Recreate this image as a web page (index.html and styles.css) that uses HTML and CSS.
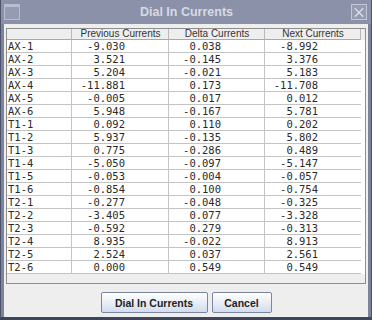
FILE: index.html
```html
<!DOCTYPE html>
<html lang="en">
<head>
    <meta charset="UTF-8">
    <title>Dial In Currents</title>
    <link rel="stylesheet" href="styles.css">
</head>
<body>
    <div class="window">
        <!-- title bar -->
        <div class="titlebar">
            <span class="win-icon"></span>
            <span class="title">Dial In Currents</span>
            <span class="close-btn">
                <svg width="15" height="15" viewBox="0 0 15 15">
                    <path d="M3 3 L12 12 M12 3 L3 12" stroke="#d9dce5" stroke-width="1.6" fill="none"/>
                </svg>
            </span>
        </div>
        <div class="content">
            <!-- table in its scroll pane -->
            <div class="scrollpane">
                <div class="row head">
                    <div class="cell"></div>
                    <div class="cell">Previous Currents</div>
                    <div class="cell">Delta Currents</div>
                    <div class="cell">Next Currents</div>
                </div>
                <div class="row"><div class="cell">AX-1</div><div class="cell num">-9.030</div><div class="cell num">0.038</div><div class="cell num">-8.992</div></div>
                <div class="row"><div class="cell">AX-2</div><div class="cell num">3.521</div><div class="cell num">-0.145</div><div class="cell num">3.376</div></div>
                <div class="row"><div class="cell">AX-3</div><div class="cell num">5.204</div><div class="cell num">-0.021</div><div class="cell num">5.183</div></div>
                <div class="row"><div class="cell">AX-4</div><div class="cell num">-11.881</div><div class="cell num">0.173</div><div class="cell num">-11.708</div></div>
                <div class="row"><div class="cell">AX-5</div><div class="cell num">-0.005</div><div class="cell num">0.017</div><div class="cell num">0.012</div></div>
                <div class="row"><div class="cell">AX-6</div><div class="cell num">5.948</div><div class="cell num">-0.167</div><div class="cell num">5.781</div></div>
                <div class="row"><div class="cell">T1-1</div><div class="cell num">0.092</div><div class="cell num">0.110</div><div class="cell num">0.202</div></div>
                <div class="row"><div class="cell">T1-2</div><div class="cell num">5.937</div><div class="cell num">-0.135</div><div class="cell num">5.802</div></div>
                <div class="row"><div class="cell">T1-3</div><div class="cell num">0.775</div><div class="cell num">-0.286</div><div class="cell num">0.489</div></div>
                <div class="row"><div class="cell">T1-4</div><div class="cell num">-5.050</div><div class="cell num">-0.097</div><div class="cell num">-5.147</div></div>
                <div class="row"><div class="cell">T1-5</div><div class="cell num">-0.053</div><div class="cell num">-0.004</div><div class="cell num">-0.057</div></div>
                <div class="row"><div class="cell">T1-6</div><div class="cell num">-0.854</div><div class="cell num">0.100</div><div class="cell num">-0.754</div></div>
                <div class="row"><div class="cell">T2-1</div><div class="cell num">-0.277</div><div class="cell num">-0.048</div><div class="cell num">-0.325</div></div>
                <div class="row"><div class="cell">T2-2</div><div class="cell num">-3.405</div><div class="cell num">0.077</div><div class="cell num">-3.328</div></div>
                <div class="row"><div class="cell">T2-3</div><div class="cell num">-0.592</div><div class="cell num">0.279</div><div class="cell num">-0.313</div></div>
                <div class="row"><div class="cell">T2-4</div><div class="cell num">8.935</div><div class="cell num">-0.022</div><div class="cell num">8.913</div></div>
                <div class="row"><div class="cell">T2-5</div><div class="cell num">2.524</div><div class="cell num">0.037</div><div class="cell num">2.561</div></div>
                <div class="row"><div class="cell">T2-6</div><div class="cell num">0.000</div><div class="cell num">0.549</div><div class="cell num">0.549</div></div>
            </div>
            <!-- buttons -->
            <div class="buttons">
                <button class="btn btn-dial">Dial In Currents</button>
                <button class="btn btn-cancel">Cancel</button>
            </div>
        </div>
    </div>
</body>
</html>
```

FILE: styles.css
```css
*{
    margin: 0;
    padding: 0;
    box-sizing: border-box;
}
body{
    background-color: #7c839c;
    width: 372px;
    height: 320px;
    overflow: hidden;
}
.window{
    width: 372px;
    height: 320px;
    display: flex;
    flex-direction: column;
    border-left: 1px solid #4d536b;
    border-right: 1px solid #4d536b;
    border-bottom: 3px solid #3f4559;
}
.titlebar{
    height: 24px;
    background-color: #8a91a9;
    display: flex;
    align-items: center;
    padding: 0 3px 0 3px;
}
.win-icon{
    width: 16px;
    height: 16px;
    border: 1px solid #b9bece;
    border-top-width: 3px;
    background-color: #959cb2;
}
.title{
    flex: 1;
    text-align: center;
    font-family: "Liberation Sans", Arial, sans-serif;
    font-weight: bold;
    font-size: 12.5px;
    color: #d7dae4;
    padding-left: 2px;
}
.close-btn{
    width: 16px;
    height: 16px;
    border: 1px solid #c4c8d5;
    background-color: #959cb2;
    display: flex;
    align-items: center;
    justify-content: center;
    margin-right: 1px;
}
.content{
    flex: 1;
    margin: 0 3px;
    background-color: #eeeeee;
    padding: 4px 2px 0 2px;
    display: flex;
    flex-direction: column;
}
.scrollpane{
    height: 256px;
    border: 1px solid #8e8e8e;
    background-color: #eeeeee;
}
.row{
    display: grid;
    grid-template-columns: 65px 97px 96px 96px;
    height: 13px;
    background-color: #ffffff;
}
.cell{
    border-right: 1px solid #c4c4c4;
    border-bottom: 1px solid #c4c4c4;
    font-family: "DejaVu Sans Mono", "Liberation Mono", monospace;
    font-size: 10.5px;
    line-height: 12px;
    color: #2a2a2a;
    padding-left: 1px;
    white-space: nowrap;
    overflow: hidden;
}
.cell:last-child{
    border-right: none;
}
.num{
    text-align: right;
    padding-right: 43px;
}
.head{
    height: 11px;
    background-color: #eeeeee;
}
.head .cell{
    font-family: "Liberation Sans", Arial, sans-serif;
    font-size: 10px;
    line-height: 10px;
    text-align: center;
    color: #333333;
    border-right-color: #b8b8b8;
    border-bottom-color: #a8a8a8;
}
.head .cell:last-child{
    border-right: 1px solid #b8b8b8;
}
.buttons{
    display: flex;
    justify-content: center;
    gap: 4px;
    margin-top: 8px;
}
.btn{
    height: 21px;
    border: 1px solid #7a86a0;
    border-radius: 2px;
    background: linear-gradient(#ffffff, #d3dcec);
    font-family: "Liberation Sans", Arial, sans-serif;
    font-weight: bold;
    font-size: 10.5px;
    color: #222222;
    outline: none;
}
.btn-dial{
    width: 107px;
}
.btn-cancel{
    width: 60px;
}
```
